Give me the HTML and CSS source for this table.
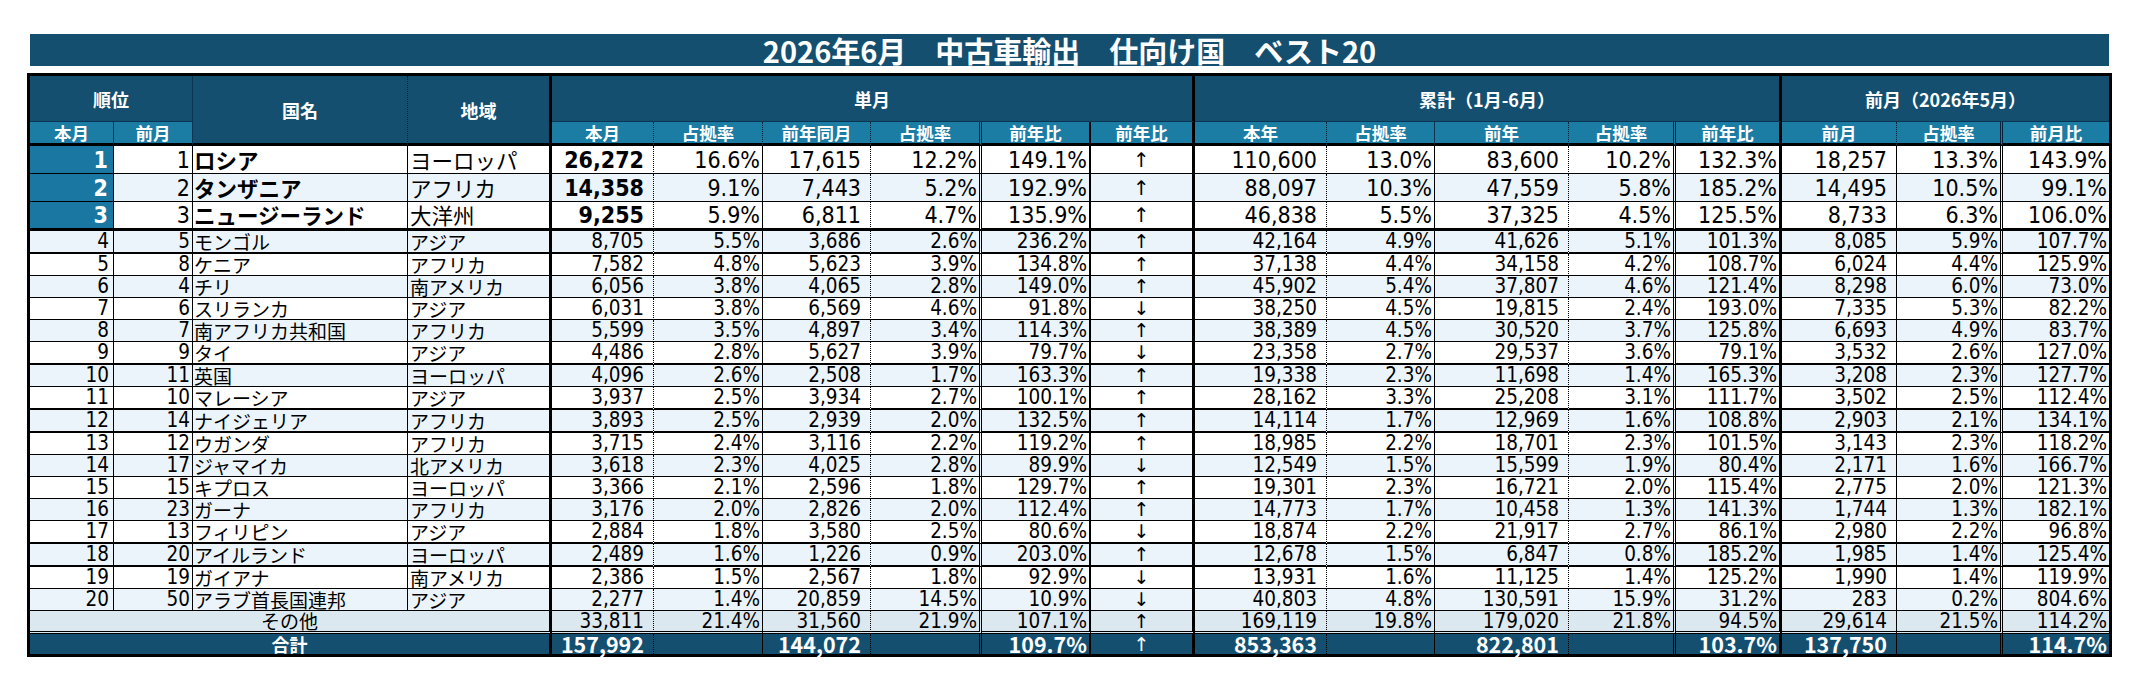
FILE: index.html
```html
<!DOCTYPE html>
<html lang="ja">
<head>
<meta charset="utf-8">
<title>2026年6月 中古車輸出 仕向け国 ベスト20</title>
<link rel="stylesheet" href="styles.css">
</head>
<body>
<div class="page">
<div class="title">2026年6月　中古車輸出　仕向け国　ベスト20</div>
<table class="rank">
<colgroup>
<col class="c1"><col class="c2"><col class="c3"><col class="c4"><col class="c5"><col class="c6"><col class="c7"><col class="c8"><col class="c9"><col class="c10"><col class="c11"><col class="c12"><col class="c13"><col class="c14"><col class="c15"><col class="c16"><col class="c17"><col class="c18">
</colgroup>
<thead>
<tr class="h1">
<th colspan="2" class="hrank">順位</th>
<th rowspan="2" class="hname">国名</th>
<th rowspan="2" class="hregion">地域</th>
<th colspan="6" class="hgrp">単月</th>
<th colspan="5" class="hgrp">累計（1月-6月）</th>
<th colspan="3" class="hlast">前月（2026年5月）</th>
</tr>
<tr class="h2">
<th>本月</th><th>前月</th><th>本月</th><th>占拠率</th><th>前年同月</th><th>占拠率</th><th>前年比</th><th>前年比</th><th>本年</th><th>占拠率</th><th>前年</th><th>占拠率</th><th>前年比</th><th>前月</th><th>占拠率</th><th>前月比</th>
</tr>
</thead>
<tbody>
<tr class="row top"><td>1</td><td>1</td><td>ロシア</td><td>ヨーロッパ</td><td>26,272</td><td>16.6%</td><td>17,615</td><td>12.2%</td><td>149.1%</td><td>↑</td><td>110,600</td><td>13.0%</td><td>83,600</td><td>10.2%</td><td>132.3%</td><td>18,257</td><td>13.3%</td><td>143.9%</td></tr>
<tr class="row top alt"><td>2</td><td>2</td><td>タンザニア</td><td>アフリカ</td><td>14,358</td><td>9.1%</td><td>7,443</td><td>5.2%</td><td>192.9%</td><td>↑</td><td>88,097</td><td>10.3%</td><td>47,559</td><td>5.8%</td><td>185.2%</td><td>14,495</td><td>10.5%</td><td>99.1%</td></tr>
<tr class="row top bk3"><td>3</td><td>3</td><td>ニュージーランド</td><td>大洋州</td><td>9,255</td><td>5.9%</td><td>6,811</td><td>4.7%</td><td>135.9%</td><td>↑</td><td>46,838</td><td>5.5%</td><td>37,325</td><td>4.5%</td><td>125.5%</td><td>8,733</td><td>6.3%</td><td>106.0%</td></tr>
<tr class="row alt bk2"><td>4</td><td>5</td><td>モンゴル</td><td>アジア</td><td>8,705</td><td>5.5%</td><td>3,686</td><td>2.6%</td><td>236.2%</td><td>↑</td><td>42,164</td><td>4.9%</td><td>41,626</td><td>5.1%</td><td>101.3%</td><td>8,085</td><td>5.9%</td><td>107.7%</td></tr>
<tr class="row"><td>5</td><td>8</td><td>ケニア</td><td>アフリカ</td><td>7,582</td><td>4.8%</td><td>5,623</td><td>3.9%</td><td>134.8%</td><td>↑</td><td>37,138</td><td>4.4%</td><td>34,158</td><td>4.2%</td><td>108.7%</td><td>6,024</td><td>4.4%</td><td>125.9%</td></tr>
<tr class="row alt"><td>6</td><td>4</td><td>チリ</td><td>南アメリカ</td><td>6,056</td><td>3.8%</td><td>4,065</td><td>2.8%</td><td>149.0%</td><td>↑</td><td>45,902</td><td>5.4%</td><td>37,807</td><td>4.6%</td><td>121.4%</td><td>8,298</td><td>6.0%</td><td>73.0%</td></tr>
<tr class="row"><td>7</td><td>6</td><td>スリランカ</td><td>アジア</td><td>6,031</td><td>3.8%</td><td>6,569</td><td>4.6%</td><td>91.8%</td><td>↓</td><td>38,250</td><td>4.5%</td><td>19,815</td><td>2.4%</td><td>193.0%</td><td>7,335</td><td>5.3%</td><td>82.2%</td></tr>
<tr class="row alt"><td>8</td><td>7</td><td>南アフリカ共和国</td><td>アフリカ</td><td>5,599</td><td>3.5%</td><td>4,897</td><td>3.4%</td><td>114.3%</td><td>↑</td><td>38,389</td><td>4.5%</td><td>30,520</td><td>3.7%</td><td>125.8%</td><td>6,693</td><td>4.9%</td><td>83.7%</td></tr>
<tr class="row bk2"><td>9</td><td>9</td><td>タイ</td><td>アジア</td><td>4,486</td><td>2.8%</td><td>5,627</td><td>3.9%</td><td>79.7%</td><td>↓</td><td>23,358</td><td>2.7%</td><td>29,537</td><td>3.6%</td><td>79.1%</td><td>3,532</td><td>2.6%</td><td>127.0%</td></tr>
<tr class="row alt"><td>10</td><td>11</td><td>英国</td><td>ヨーロッパ</td><td>4,096</td><td>2.6%</td><td>2,508</td><td>1.7%</td><td>163.3%</td><td>↑</td><td>19,338</td><td>2.3%</td><td>11,698</td><td>1.4%</td><td>165.3%</td><td>3,208</td><td>2.3%</td><td>127.7%</td></tr>
<tr class="row bk2"><td>11</td><td>10</td><td>マレーシア</td><td>アジア</td><td>3,937</td><td>2.5%</td><td>3,934</td><td>2.7%</td><td>100.1%</td><td>↑</td><td>28,162</td><td>3.3%</td><td>25,208</td><td>3.1%</td><td>111.7%</td><td>3,502</td><td>2.5%</td><td>112.4%</td></tr>
<tr class="row alt bk2"><td>12</td><td>14</td><td>ナイジェリア</td><td>アフリカ</td><td>3,893</td><td>2.5%</td><td>2,939</td><td>2.0%</td><td>132.5%</td><td>↑</td><td>14,114</td><td>1.7%</td><td>12,969</td><td>1.6%</td><td>108.8%</td><td>2,903</td><td>2.1%</td><td>134.1%</td></tr>
<tr class="row"><td>13</td><td>12</td><td>ウガンダ</td><td>アフリカ</td><td>3,715</td><td>2.4%</td><td>3,116</td><td>2.2%</td><td>119.2%</td><td>↑</td><td>18,985</td><td>2.2%</td><td>18,701</td><td>2.3%</td><td>101.5%</td><td>3,143</td><td>2.3%</td><td>118.2%</td></tr>
<tr class="row alt"><td>14</td><td>17</td><td>ジャマイカ</td><td>北アメリカ</td><td>3,618</td><td>2.3%</td><td>4,025</td><td>2.8%</td><td>89.9%</td><td>↓</td><td>12,549</td><td>1.5%</td><td>15,599</td><td>1.9%</td><td>80.4%</td><td>2,171</td><td>1.6%</td><td>166.7%</td></tr>
<tr class="row"><td>15</td><td>15</td><td>キプロス</td><td>ヨーロッパ</td><td>3,366</td><td>2.1%</td><td>2,596</td><td>1.8%</td><td>129.7%</td><td>↑</td><td>19,301</td><td>2.3%</td><td>16,721</td><td>2.0%</td><td>115.4%</td><td>2,775</td><td>2.0%</td><td>121.3%</td></tr>
<tr class="row alt"><td>16</td><td>23</td><td>ガーナ</td><td>アフリカ</td><td>3,176</td><td>2.0%</td><td>2,826</td><td>2.0%</td><td>112.4%</td><td>↑</td><td>14,773</td><td>1.7%</td><td>10,458</td><td>1.3%</td><td>141.3%</td><td>1,744</td><td>1.3%</td><td>182.1%</td></tr>
<tr class="row bk2"><td>17</td><td>13</td><td>フィリピン</td><td>アジア</td><td>2,884</td><td>1.8%</td><td>3,580</td><td>2.5%</td><td>80.6%</td><td>↓</td><td>18,874</td><td>2.2%</td><td>21,917</td><td>2.7%</td><td>86.1%</td><td>2,980</td><td>2.2%</td><td>96.8%</td></tr>
<tr class="row alt bk2"><td>18</td><td>20</td><td>アイルランド</td><td>ヨーロッパ</td><td>2,489</td><td>1.6%</td><td>1,226</td><td>0.9%</td><td>203.0%</td><td>↑</td><td>12,678</td><td>1.5%</td><td>6,847</td><td>0.8%</td><td>185.2%</td><td>1,985</td><td>1.4%</td><td>125.4%</td></tr>
<tr class="row"><td>19</td><td>19</td><td>ガイアナ</td><td>南アメリカ</td><td>2,386</td><td>1.5%</td><td>2,567</td><td>1.8%</td><td>92.9%</td><td>↓</td><td>13,931</td><td>1.6%</td><td>11,125</td><td>1.4%</td><td>125.2%</td><td>1,990</td><td>1.4%</td><td>119.9%</td></tr>
<tr class="row alt"><td>20</td><td>50</td><td>アラブ首長国連邦</td><td>アジア</td><td>2,277</td><td>1.4%</td><td>20,859</td><td>14.5%</td><td>10.9%</td><td>↓</td><td>40,803</td><td>4.8%</td><td>130,591</td><td>15.9%</td><td>31.2%</td><td>283</td><td>0.2%</td><td>804.6%</td></tr>
<tr class="sum other"><td colspan="4">その他</td><td>33,811</td><td>21.4%</td><td>31,560</td><td>21.9%</td><td>107.1%</td><td>↑</td><td>169,119</td><td>19.8%</td><td>179,020</td><td>21.8%</td><td>94.5%</td><td>29,614</td><td>21.5%</td><td>114.2%</td></tr>
<tr class="sum total"><td colspan="4">合計</td><td>157,992</td><td></td><td>144,072</td><td></td><td>109.7%</td><td>↑</td><td>853,363</td><td></td><td>822,801</td><td></td><td>103.7%</td><td>137,750</td><td></td><td>114.7%</td></tr>
</tbody>
</table>
</div>
</body>
</html>
```

FILE: styles.css
```css
* { box-sizing: border-box; }
html, body { margin: 0; background: #fff; }
body {
  font-family: "DejaVu Sans Condensed", "DejaVu Sans", "Noto Sans CJK JP", sans-serif;
  color: #000;
}
.page { padding: 34px 0 0 27px; }

.title {
  margin: 0 0 7px 3px;
  width: 2079px;
  height: 32px;
  background: #154f70;
  color: #fff;
  font-family: "Noto Sans CJK JP", sans-serif;
  font-weight: 700;
  font-size: 29px;
  line-height: 32px;
  text-align: center;
  white-space: nowrap;
}

.rank {
  border-collapse: separate;
  border-spacing: 0;
  table-layout: fixed;
  width: 2085px;
  border: 3px solid #000;
}
.rank th, .rank td {
  padding: 0;
  white-space: nowrap;
  vertical-align: middle;
}

.c1 { width: 84px; }
.c2 { width: 79px; }
.c3 { width: 215px; }
.c4 { width: 144px; }
.c5 { width: 102px; }
.c6 { width: 109px; }
.c7 { width: 108px; }
.c8 { width: 111px; }
.c9 { width: 109px; }
.c10 { width: 104px; }
.c11 { width: 132px; }
.c12 { width: 108px; }
.c13 { width: 134px; }
.c14 { width: 107px; }
.c15 { width: 106px; }
.c16 { width: 115px; }
.c17 { width: 106px; }
.c18 { width: 106px; }

/* ---------- header ---------- */
.rank thead th {
  background: #154f70;
  color: #fff;
  font-family: "Noto Sans CJK JP", sans-serif;
  font-weight: 700;
  font-size: 18px;
  line-height: 20px;
  text-align: center;
}
.h1 { height: 46px; }
.h1 th { border-bottom: 1px solid #0b3450; }
.h1 .hrank { border-right: 1px solid #0b3450; }
.h1 .hname { border-right: 1px dotted #04213a; border-bottom: 3px solid #000; }
.h1 .hregion { border-right: 3px solid #000; border-bottom: 3px solid #000; }
.h1 .hgrp { border-right: 3px solid #000; }

.h2 { height: 24px; }
.rank .h2 th {
  background: #1b7ca4;
  font-size: 17.5px;
  line-height: 21px;
  border-bottom: 3px solid #000;
}
.h2 th:nth-child(1), .h2 th:nth-child(2), .h2 th:nth-child(10) { border-right: 1px solid #0b3450; }
.h2 th:nth-child(3), .h2 th:nth-child(4), .h2 th:nth-child(5),
.h2 th:nth-child(9), .h2 th:nth-child(11), .h2 th:nth-child(14) { border-right: 1px dotted #04213a; }
.h2 th:nth-child(6), .h2 th:nth-child(12), .h2 th:nth-child(15) { border-right: 3px double #04213a; }
.h2 th:nth-child(7) { border-right: 2px solid #000; }
.h2 th:nth-child(8), .h2 th:nth-child(13) { border-right: 3px solid #000; }

/* ---------- body rows ---------- */
.row { height: 22px; }
.row.bk2 { height: 23px; }
.row.top { height: 28px; }
.row.top.bk3 { height: 29px; }
.alt { background: #eaf4fa; }

.row td {
  border-bottom: 1px solid #000;
  font-size: 20.5px;
  line-height: 21px;
  text-align: right;
  padding-right: 9px;
}
.row.bk2 td { border-bottom-width: 2px; }
.row.bk3 td { border-bottom-width: 3px; }

.row td:nth-child(1), .row td:nth-child(2), .row td:nth-child(3),
.row td:nth-child(6), .row td:nth-child(12), .row td:nth-child(16) { border-right: 1px solid #000; }
.row td:nth-child(4), .row td:nth-child(10), .row td:nth-child(15) { border-right: 3px solid #000; }
.row td:nth-child(5), .row td:nth-child(7), .row td:nth-child(11), .row td:nth-child(13) { border-right: 1px dotted #000; }
.row td:nth-child(8), .row td:nth-child(14), .row td:nth-child(17) { border-right: 3px double #000; }
.row td:nth-child(9) { border-right: 2px solid #000; }

.row td:nth-child(1) { padding-right: 4px; }
.row td:nth-child(2) { padding-right: 2px; }
.row td:nth-child(3), .row td:nth-child(4) {
  text-align: left;
  padding-right: 0;
  font-family: "Noto Sans CJK JP", sans-serif;
  font-size: 19px;
}
.row td:nth-child(3) { padding-left: 1px; }
.row td:nth-child(4) { padding-left: 2px; }
.row td:nth-child(6), .row td:nth-child(8), .row td:nth-child(9),
.row td:nth-child(12), .row td:nth-child(14), .row td:nth-child(15),
.row td:nth-child(17), .row td:nth-child(18) { padding-right: 2px; }
.row td:nth-child(10) {
  text-align: center;
  padding-right: 0;
  font-family: "DejaVu Sans", sans-serif;
  font-size: 19px;
}

/* top three */
.row.top td { font-size: 23px; line-height: 26px; }
.row.top td:nth-child(3), .row.top td:nth-child(4) { font-size: 21.5px; }
.row.top td:nth-child(3), .row.top td:nth-child(5) { font-weight: 700; }
.row.top td:nth-child(1) {
  background: #1a77a1;
  color: #fff;
  font-weight: 700;
  padding-right: 5px;
}
.row.top td:nth-child(10) { font-size: 20px; }

/* ---------- summary rows ---------- */
.sum td {
  font-size: 20.5px;
  line-height: 20px;
  text-align: right;
  padding-right: 9px;
}
.sum td:nth-child(1) { border-right: 3px solid #000; }
.sum td:nth-child(2), .sum td:nth-child(4), .sum td:nth-child(8), .sum td:nth-child(10) { border-right: 1px dotted #000; }
.sum td:nth-child(3), .sum td:nth-child(9), .sum td:nth-child(13) { border-right: 1px solid #000; }
.sum td:nth-child(5), .sum td:nth-child(11), .sum td:nth-child(14) { border-right: 3px double #000; }
.sum td:nth-child(6) { border-right: 2px solid #000; }
.sum td:nth-child(7), .sum td:nth-child(12) { border-right: 3px solid #000; }

.sum td:nth-child(1) {
  text-align: center;
  padding-right: 0;
  font-family: "Noto Sans CJK JP", sans-serif;
  font-size: 19px;
}
.sum td:nth-child(3), .sum td:nth-child(5), .sum td:nth-child(6),
.sum td:nth-child(9), .sum td:nth-child(11), .sum td:nth-child(12),
.sum td:nth-child(14), .sum td:nth-child(15) { padding-right: 2px; }
.sum td:nth-child(7) {
  text-align: center;
  padding-right: 0;
  font-family: "DejaVu Sans", sans-serif;
  font-size: 19px;
}

.other { height: 23px; background: #dce8ef; }
.other td { border-bottom: 3px double #000; }

.total { height: 20px; background: #154f70; }
.total td {
  color: #fff;
  font-family: "Noto Sans CJK JP", sans-serif;
  font-weight: 700;
  font-size: 21.5px;
}
.total td:nth-child(1) { font-size: 18px; }
.total td:nth-child(7) { font-family: "DejaVu Sans", sans-serif; font-weight: 400; font-size: 19px; }
```
